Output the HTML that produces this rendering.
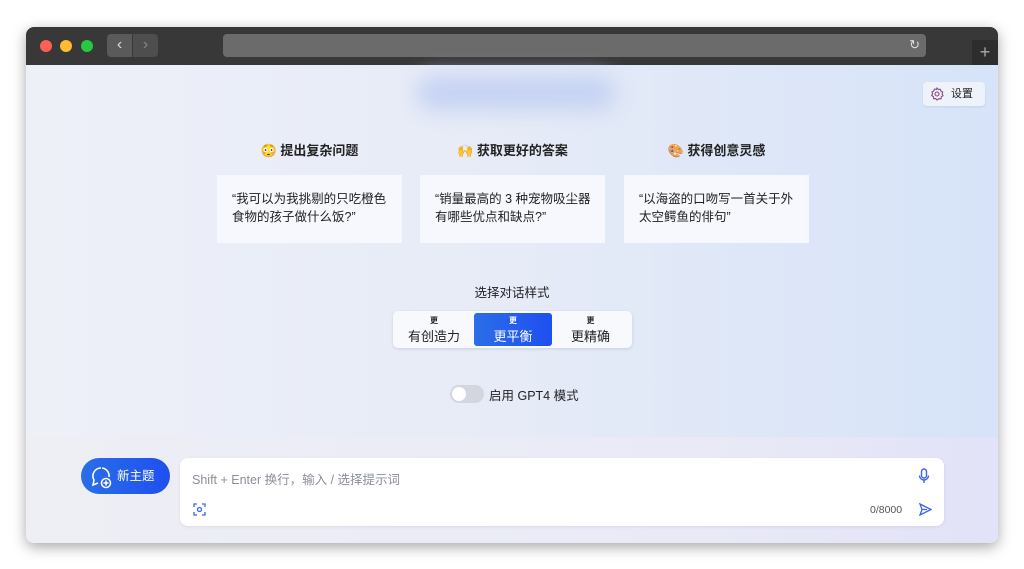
<!DOCTYPE html>
<html><head><meta charset="utf-8"><style>
*{margin:0;padding:0;box-sizing:border-box}
body{width:1024px;height:569px;background:#fff;font-family:"Liberation Sans","Noto Sans CJK SC",sans-serif;position:relative;overflow:hidden}
.win{position:absolute;left:26px;top:27px;width:972px;height:516px;border-radius:8px;overflow:hidden;box-shadow:0 4px 14px rgba(0,0,0,.35)}
.bar{position:absolute;left:0;top:0;width:100%;height:38px;background:#383838}
.dot{position:absolute;top:13px;width:12px;height:12px;border-radius:50%}
.content{position:absolute;left:0;top:38px;width:100%;height:478px;background:linear-gradient(90deg,#eef0f8 0%,#e6ebf7 50%,#d6e3f8 100%)}
.bottom{position:absolute;left:0;top:410px;width:100%;height:106px;background:linear-gradient(90deg,#eeeff5,#e9eaf6 70%,#e2e2f8)}
.h{position:absolute;top:140px;font-size:13px;font-weight:bold;color:#222;text-align:center;width:185px}
.card{position:absolute;top:175px;width:185px;height:68px;background:#f6f8fd;padding:15px 8px 0 15px;font-size:12.5px;line-height:18px;color:#222}
</style></head><body>
<div class="win">
<div class="bar">
<div class="dot" style="left:14px;background:#fe5f57"></div>
<div class="dot" style="left:34px;background:#febc2e"></div>
<div class="dot" style="left:55px;background:#28c840"></div>
<div style="position:absolute;left:81px;top:7px;width:25px;height:23px;background:#5a5a5a;border-radius:4px 0 0 4px;color:#ddd;font-size:16px;text-align:center;line-height:22px">‹</div>
<div style="position:absolute;left:107px;top:7px;width:25px;height:23px;background:#4e4e4e;border-radius:0 4px 4px 0;color:#888;font-size:16px;text-align:center;line-height:22px">›</div>
<div style="position:absolute;left:197px;top:7px;width:703px;height:23px;background:#6b6b6b;border-radius:4px"><span style="position:absolute;right:6px;top:3px;color:#ddd;font-size:13px">↻</span></div>
<div style="position:absolute;left:946px;top:13px;width:26px;height:25px;background:#2d2d2d;color:#aaa;font-size:18px;text-align:center;line-height:24px">+</div>
</div>
<div class="content">
<div style="position:absolute;left:390px;top:10px;width:200px;height:36px;border-radius:18px;background:#c6d3f3;filter:blur(10px)"></div>
<div style="position:absolute;left:897px;top:17px;width:62px;height:24px;background:#eef2fb;border-radius:4px;box-shadow:0 1px 2px rgba(0,0,0,.08);font-size:11px;color:#222;line-height:24px;padding-left:28px">设置
<svg style="position:absolute;left:7px;top:5px" width="14" height="14" viewBox="0 0 14 14" fill="none" stroke="#8a4a8a" stroke-width="1.1"><path d="M7 1l1.3 1.5 2-.3.6 1.9 1.8.9-.6 1.9.9 1.8-1.7 1.1-.3 2-2-.1L7 13l-1.3-1.4-2 .1-.3-2L1.7 8.6l.9-1.8-.6-1.9 1.8-.9.6-1.9 2 .3z"/><circle cx="7" cy="7" r="2"/></svg></div>
</div>
<div class="bottom"></div>
</div>
<div class="h" style="left:217px">😳 提出复杂问题</div>
<div class="h" style="left:420px">🙌 获取更好的答案</div>
<div class="h" style="left:624px">🎨 获得创意灵感</div>
<div class="card" style="left:217px">“我可以为我挑剔的只吃橙色食物的孩子做什么饭?”</div>
<div class="card" style="left:420px">“销量最高的 3 种宠物吸尘器有哪些优点和缺点?”</div>
<div class="card" style="left:624px">“以海盗的口吻写一首关于外太空鳄鱼的俳句”</div>
<div style="position:absolute;left:0;width:1024px;top:282px;text-align:center;font-size:12.5px;color:#222">选择对话样式</div>
<div style="position:absolute;left:393px;top:311px;width:239px;height:37px;background:#f7f9fd;border-radius:5px;box-shadow:0 1px 3px rgba(0,0,0,.12)"></div>
<div style="position:absolute;left:474px;top:313px;width:78px;height:33px;background:linear-gradient(90deg,#2a6ee8,#1f4ff0);border-radius:3px"></div>
<div style="position:absolute;left:397px;top:315px;width:74px;text-align:center;color:#222"><div style="font-size:8px;font-weight:bold">更</div><div style="font-size:13px">有创造力</div></div>
<div style="position:absolute;left:474px;top:315px;width:78px;text-align:center;color:#fff"><div style="font-size:8px;font-weight:bold">更</div><div style="font-size:13px">更平衡</div></div>
<div style="position:absolute;left:553px;top:315px;width:75px;text-align:center;color:#222"><div style="font-size:8px;font-weight:bold">更</div><div style="font-size:13px">更精确</div></div>
<div style="position:absolute;left:450px;top:385px;width:34px;height:18px;border-radius:9px;background:#d3d6de"><div style="position:absolute;left:2px;top:2px;width:14px;height:14px;border-radius:50%;background:#fff"></div></div>
<div style="position:absolute;left:489px;top:385px;font-size:12.5px;color:#222">启用 GPT4 模式</div>
<div style="position:absolute;left:81px;top:458px;width:89px;height:36px;border-radius:18px;background:linear-gradient(90deg,#2a6ee8,#1f4ff0);color:#fff;font-size:12.5px;line-height:36px;padding-left:36px">新主题
<svg style="position:absolute;left:8px;top:7px" width="24" height="24" viewBox="0 0 24 24" fill="none" stroke="#fff" stroke-width="1.6"><path d="M12 3a8 8 0 0 0-7 12l-1 5 5-2"/><path d="M13 3a8 8 0 0 1 7 9"/><circle cx="17" cy="18" r="4.5" fill="#2a5ff0"/><path d="M17 15.5v5M14.5 18h5"/></svg></div>
<div style="position:absolute;left:180px;top:458px;width:764px;height:68px;background:#fff;border-radius:8px;box-shadow:0 1px 3px rgba(0,0,0,.08)">
<div style="position:absolute;left:12px;top:11px;font-size:12.5px;color:#8a8f99">Shift + Enter 换行，输入 / 选择提示词</div>
<svg style="position:absolute;left:738px;top:10px" width="12" height="16" viewBox="0 0 12 16" fill="none" stroke="#3b63e8" stroke-width="1.4"><rect x="3.5" y="1" width="5" height="9" rx="2.5"/><path d="M1.5 7.5a4.5 4.5 0 0 0 9 0M6 12v3"/></svg>
<svg style="position:absolute;left:13px;top:45px" width="13" height="13" viewBox="0 0 13 13" fill="none" stroke="#3b63e8" stroke-width="1.3"><path d="M1 4V1h3M9 1h3v3M12 9v3H9M4 12H1V9"/><circle cx="6.5" cy="6.5" r="2"/></svg>
<div style="position:absolute;left:690px;top:46px;font-size:10.5px;color:#555">0/8000</div>
<svg style="position:absolute;left:739px;top:45px" width="13" height="13" viewBox="0 0 13 13" fill="none" stroke="#3b63e8" stroke-width="1.3"><path d="M1 1l11 5.5L1 12l2-5.5zM3 6.5h5"/></svg>
</div>
</body></html>
